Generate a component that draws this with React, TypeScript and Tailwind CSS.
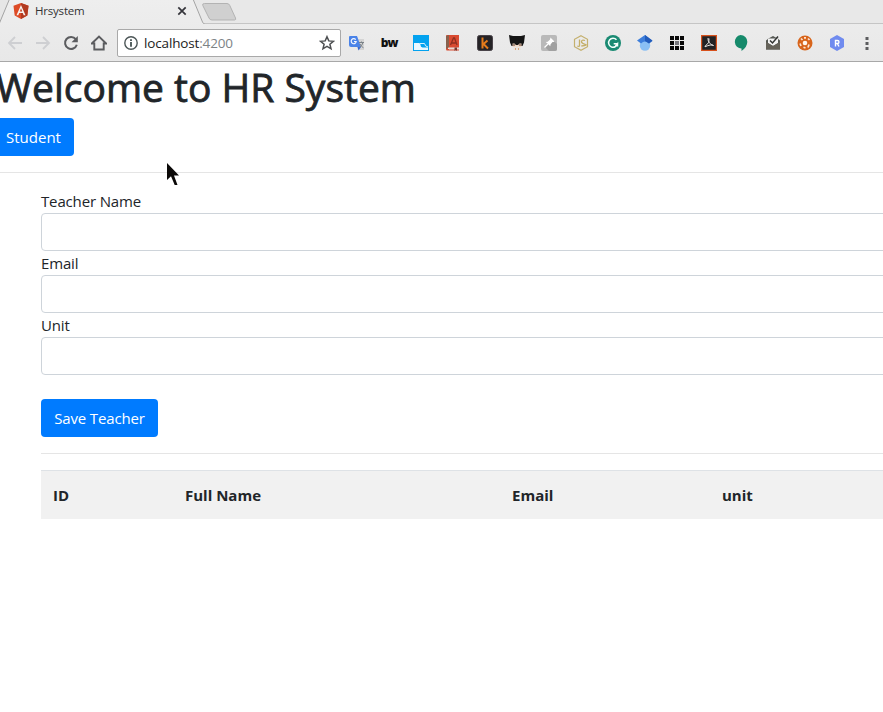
import React from "react";

const box = "block h-4 w-4 shrink-0";

function AngularLogo() {
  return (
    <svg className="block h-4 w-4 shrink-0" viewBox="0 0 16 16">
      <path d="M8 0 15.5 2.7 14.3 12.6 8 16 1.7 12.6.5 2.7z" fill="#dd4b26" />
      <path d="M8 0 15.5 2.7 14.3 12.6 8 16z" fill="#b23a20" />
      <path d="M8 2 3.5 12.2H5.3L6.2 9.9H9.8L10.7 12.2H12.5zM8 5.3 9.2 8.4H6.8z" fill="#f7f1ee" />
    </svg>
  );
}

function TabStrip() {
  return (
    <div className="relative h-6 w-full">
      <svg className="absolute left-0 top-0 h-6 w-[883px]" viewBox="0 0 883 24">
        <path d="M0 0H9L0 22z" fill="#e6e6e6" />
        <path d="M194 0H883V24H203.500z" fill="#e8e8e8" />
        <path d="M-.5 23 9.500 -1" fill="none" stroke="#a3a3a3" />
        <path d="M193 -1 202.500 22Q203.300 24 205 24H883" fill="none" stroke="#a3a3a3" />
        <path d="M204.500 3.500H227Q229 3.500 229.800 5.500L235.500 18Q236.300 20 234.500 20H212Q209.800 20 209 18L202.800 5.500Q202 3.500 204.500 3.500z" fill="#d0d0d0" stroke="#b3b3b3" />
      </svg>
      <div className="relative flex h-[22px] items-center pl-[13px]">
        <AngularLogo />
        <span className="ml-[6px] w-[142px] text-[11.5px] leading-[16px] tracking-[-0.2px] text-[#333]">Hrsystem</span>
        <svg className="block h-[10px] w-[10px]" viewBox="0 0 10 10">
          <path d="M1.300 1.300 8.700 8.700M8.700 1.300 1.300 8.700" stroke="#34343a" strokeWidth="1.700" />
        </svg>
      </div>
    </div>
  );
}

function Extensions() {
  return (
    <div className="flex items-center gap-4">
      <svg className={box} viewBox="0 0 16 16">
        <path d="M6 4H15V15H9z" fill="#d4d4d4" />
        <path d="M1 1H8L12 12H2Q0 12 0 10V2Q0 1 1 1z" fill="#4a83e8" />
        <path d="M8.500 12H12L9.500 15.500z" fill="#3367d6" />
        <path d="M6.700 4.700A2.500 2.500 0 1 0 7.200 6.500H5" fill="none" stroke="#f4f7ff" strokeWidth="1.200" />
        <path d="M10 7.500H15M12.500 6.500V7.500M14 7.500Q13 11 10.500 12.500M11 9Q12.500 12 14.500 12.800" fill="none" stroke="#7b8288" />
      </svg>
      <span className="flex h-4 w-4 shrink-0 items-center justify-center text-[12px] font-extrabold leading-none tracking-[-1px] text-[#111]">bw</span>
      <svg className={box} viewBox="0 0 16 16">
        <path d="M0 0H16V16H0z" fill="#03a2ef" />
        <path d="M1 8H6Q7.500 8 7.500 10T9.500 12.500H15V15H1z" fill="#eaf8ff" />
        <path d="M7 8.500H11.500M11.500 8.500Q12 11.500 15 12" fill="none" stroke="#d5f0fd" />
      </svg>
      <svg className={box} viewBox="0 0 16 16">
        <path d="M1 1Q1 0 2 0H14V12.500H3V14H14V15.500H2Q1 15.500 1 14z" fill="#d94b31" />
        <path d="M1 1 4 0V12L1 14z" fill="#88614d" />
        <path d="M5.500 10 8.500 3H9.500L12 10M6.500 8H11" fill="none" stroke="#8e3020" strokeWidth="1.300" />
        <path d="M4 13H14V14.500H4z" fill="#e8dcd4" />
        <path d="M9.500 12.500H12V16L10.800 15 9.500 16z" fill="#74392f" />
      </svg>
      <svg className={box} viewBox="0 0 16 16">
        <rect x=".5" y=".5" width="15" height="15" rx="2" fill="#252326" stroke="#494349" />
        <path d="M5.500 2.500V13.500M10.500 5.500 6.500 9 11 13.500" fill="none" stroke="#e57c1b" strokeWidth="2" />
      </svg>
      <svg className={box} viewBox="0 0 16 16">
        <path d="M0 0 4 1H12L16 0 15 7.500 13.500 11H2.500L1 7.500z" fill="#141414" />
        <path d="M3.500 8.500 5.500 8.500 7 10H9L10.500 8.500 12.500 8.500V11.500L10 13H6L3.500 11.500z" fill="#efd6c2" />
        <path d="M3.500 10H6M10 10H12.500" stroke="#5a3a2c" strokeWidth="1.200" />
        <path d="M5.500 11.500H10.500L12.500 15H3.500z" fill="#e9e4de" />
        <path d="M6 13H7V15H6zM9 13H10V15H9z" fill="#d6a47d" />
      </svg>
      <svg className={box} viewBox="0 0 16 16">
        <rect width="16" height="16" rx="2" fill="#b9b9b9" />
        <path d="M10 3 16 9V14Q16 16 14 16H8L4 12z" fill="#a1a1a1" />
        <path d="M9.500 2.500 13.500 6.500 12.500 7 11.500 7 9.500 9.500 9.300 11.300 4.800 7 6.700 6.700 9 4.500z" fill="#fff" />
        <path d="M7 9 3.500 12.500" stroke="#fff" strokeWidth="1.200" />
      </svg>
      <svg className={box} viewBox="0 0 16 16">
        <path d="M8 .7 14.500 4.300V11.700L8 15.300 1.500 11.700V4.300z" fill="none" stroke="#c4b06e" strokeWidth="1.200" />
        <path d="M6.500 4.500V10.500Q6.500 12 4.300 11M12 5.500Q8.500 4.500 8.500 6.500T12 9.300 8.300 11" fill="none" stroke="#c4ae66" strokeWidth="1.300" />
      </svg>
      <svg className={box} viewBox="0 0 16 16">
        <circle cx="8" cy="8" r="8" fill="#198a72" />
        <path d="M11.500 4.800A4.500 4.500 0 1 0 12.500 8.700H8.700M10.500 11 12.500 8.700V11.500" fill="none" stroke="#f4fffc" strokeWidth="1.500" />
      </svg>
      <svg className={box} viewBox="0 0 16 16">
        <circle cx="8" cy="10.500" r="5.200" fill="#8ac0f4" />
        <path d="M8 0 0 5.500 4 8.500Q8 4.500 12 8.500L15.500 6z" fill="#3d7edb" />
        <path d="M8 0 15.500 5.500 12 8.500 8 6z" fill="#225cbb" />
      </svg>
      <svg className={box} viewBox="0 0 16 16">
        <path d="M1 1H5V5H1zM6 1H10V5H6zM11 1H15V5H11zM1 6H5V10H1zM11 6H15V10H11zM1 11H5V15H1zM6 11H10V15H6zM11 11H15V15H11z" fill="#080808" />
        <path d="M6 6H10V10H6z" fill="#77777d" />
      </svg>
      <svg className={box} viewBox="0 0 16 16">
        <path d="M.6.600H15.400V15.400H.6z" fill="#222326" stroke="#d8511c" strokeWidth="1.200" />
        <path d="M7 3Q6.700 5.500 8.300 7.700T12.500 10.500Q10 9 4 11.800Q3.500 11 6 9.500T8 3.500" fill="none" stroke="#e8e4e2" strokeWidth="1" />
      </svg>
      <svg className={box} viewBox="0 0 16 16">
        <path d="M7.500 0A6.800 6.800 0 0 1 14.300 7Q14.300 12 8.500 16V13.500A6.800 6.800 0 0 1 7.500 0z" fill="#168a6b" />
      </svg>
      <svg className={box} viewBox="0 0 16 16">
        <path d="M1 5.500 3.500 3.500 8 1 12.500 3.500 15 5.500V14.500H1z" fill="#565954" />
        <path d="M3 3.500H13V8L8 11 3 8z" fill="#f3f3f3" />
        <path d="M5 5.500 7.500 8 13 1.500" fill="none" stroke="#343634" strokeWidth="1.500" />
        <path d="M1 7 8 11 15 7V14.500H1z" fill="#66635a" />
      </svg>
      <svg className={box} viewBox="0 0 16 16">
        <circle cx="8" cy="8" r="7.500" fill="#d8651c" />
        <circle cx="8" cy="8" r="2.300" fill="#fff6ee" />
        <path d="M4 3.500 5.500 5M11 3.500 12.500 5M3 8.500 4 11M12 9.500 11 12.500M6.500 12.300 8.500 13M7 2.800H9" stroke="#fce5d3" strokeWidth="1.700" />
      </svg>
      <svg className={box} viewBox="0 0 16 16">
        <path d="M8 0 15 4V12L8 16 1 12V4z" fill="#708bef" />
        <path d="M6.500 11.500V5.500H8.500Q10 5.500 10 7T8.500 8.500H6.500M8.300 8.500 10 11.500" fill="none" stroke="#fff" strokeWidth="1.400" />
      </svg>
    </div>
  );
}

function Toolbar() {
  return (
    <div className="flex h-[38px] w-full items-center border-b border-[#a8a8a8] pl-[7px]">
      <svg className="block h-4 w-4" viewBox="0 0 16 16"><path d="M15 8H2M8 2 2 8 8 14" fill="none" stroke="#cecfd2" strokeWidth="1.800" /></svg>
      <svg className="ml-[12px] block h-4 w-4" viewBox="0 0 16 16"><path d="M1 8H14M8 2 14 8 8 14" fill="none" stroke="#cecfd2" strokeWidth="1.800" /></svg>
      <svg className="ml-[12px] block h-4 w-4" viewBox="0 0 16 16">
        <path d="M12.800 4.200A6 6 0 1 0 13.800 9.700" fill="none" stroke="#5b5c5f" strokeWidth="2" />
        <path d="M14.800 1V7.300H8.500z" fill="#5b5c5f" />
      </svg>
      <svg className="ml-[12px] block h-4 w-4" viewBox="0 0 16 16"><path d="M.8 8.500 8 1.500 15.200 8.500H12.700V14.500H3.300V8.500z" fill="none" stroke="#5b5c5f" strokeWidth="1.900" /></svg>
      <div className="ml-[10px] flex h-7 w-[224px] shrink-0 items-center rounded-[2px] border border-[#a9a9a9] bg-white pl-[6px]">
        <svg className="block h-[14px] w-[14px] shrink-0" viewBox="0 0 14 14">
          <circle cx="7" cy="7" r="6.200" fill="none" stroke="#4c5657" strokeWidth="1.400" />
          <path d="M7 3.200V4.900M7 6V10.700" stroke="#394747" strokeWidth="1.700" />
        </svg>
        <span className="ml-[6px] w-[175px] text-[13.5px] leading-5 tracking-[-0.15px] text-[#222]">localhost<span className="text-[#7d8386]">:4200</span></span>
        <svg className="block h-4 w-4 shrink-0" viewBox="0 0 16 16"><path d="M8 1.700 9.800 5.900 14.400 6.300 10.900 9.300 12 13.800 8 11.400 4 13.800 5.100 9.300 1.600 6.300 6.200 5.900z" fill="none" stroke="#4d4f51" strokeWidth="1.500" /></svg>
      </div>
      <div className="ml-2"><Extensions /></div>
      <svg className="ml-[20px] block h-4 w-[4px]" viewBox="0 0 4 16"><path d="M.5 2H3.500V5H.5zM.5 7H3.500V10H.5zM.5 12H3.500V15H.5z" fill="#5c5d5f" /></svg>
    </div>
  );
}

function Field({ label }: { label: string }) {
  return (
    <label className="block">
      <span className="block h-6 leading-6 tracking-[-0.15px]">{label}</span>
      <input className="block h-[38px] w-[900px] rounded border border-[#ced4da] bg-white px-3 outline-none" />
    </label>
  );
}

export default function App() {
  return (
    <div className="relative h-[712px] w-[883px] overflow-hidden bg-white font-['Open_Sans','Noto_Sans',sans-serif] text-[15px] text-[#212529]">
      <header className="bg-gradient-to-b from-[#eeeeee] to-[#e8e8e8]">
        <TabStrip />
        <Toolbar />
      </header>
      <main>
        <h1 className="-ml-[4px] mb-2 h-12 whitespace-nowrap pt-px text-[39px] font-medium leading-[48px] [-webkit-text-stroke:0.8px_#212529]">Welcome to HR System</h1>
        <button className="-ml-[7px] block h-[38px] w-[81px] rounded bg-[#007bff] text-center leading-6 text-white">Student</button>
        <hr className="mb-4 mt-4 border-t border-[#e5e5e5]" />
        <section className="ml-[41px] w-[900px]">
          <Field label="Teacher Name" />
          <Field label="Email" />
          <Field label="Unit" />
          <button className="mt-6 block h-[38px] w-[117px] rounded bg-[#007bff] leading-6 tracking-[-0.15px] text-white">Save Teacher</button>
          <hr className="mb-4 mt-4 border-t border-[#e5e5e5]" />
          <table className="h-[49px] w-full table-fixed border-collapse bg-[#f1f1f1] text-left">
            <thead>
              <tr className="border-t border-[#dee2e6]">
                <th className="w-[132px] px-3">ID</th>
                <th className="w-[327px] px-3">Full Name</th>
                <th className="w-[210px] px-3">Email</th>
                <th className="px-3">unit</th>
              </tr>
            </thead>
          </table>
        </section>
      </main>
      <svg className="absolute left-[166px] top-[162px] h-6 w-[14px]" viewBox="0 0 14 24">
        <path d="M1 1V18L5 14.200 8.700 23H11.500L8 13.500H13z" fill="#0b0908" />
      </svg>
    </div>
  );
}
